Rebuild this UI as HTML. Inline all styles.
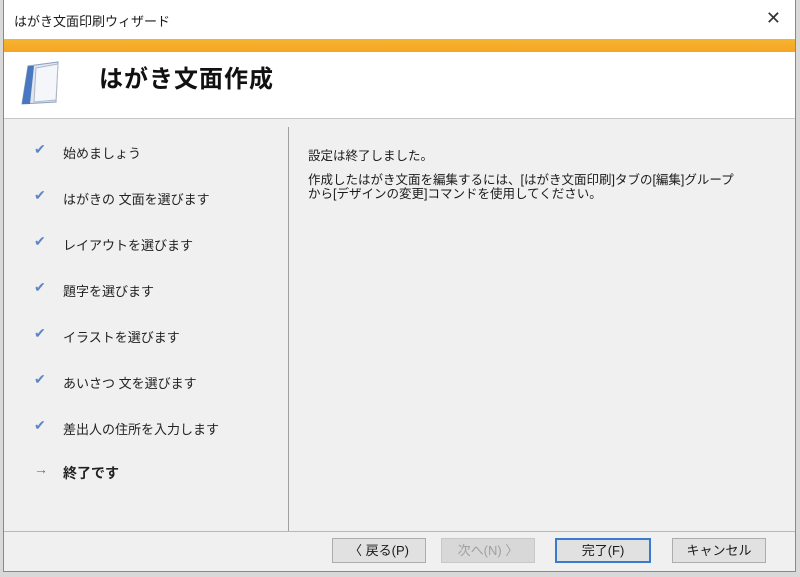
<!DOCTYPE html>
<html><head><meta charset="utf-8"><style>
body{margin:0;width:800px;height:577px;background:#d9d9d9;position:relative;overflow:hidden;font-family:"Liberation Sans","Noto Sans CJK JP",sans-serif;color:#1a1a1a}
.win{position:absolute;left:3px;top:0;width:793px;height:572px;background:#f0f0f0;border:1px solid #6a8fbf;border-top:none;box-sizing:border-box}
.title{position:absolute;left:0;top:0;right:0;height:39px;background:#fff;font-size:13px}
.title span{position:absolute;left:10px;top:11px}
.close{position:absolute;right:14px;top:8px;font-size:18px;color:#333}
.orange{position:absolute;left:0;right:0;top:39px;height:13px;background:linear-gradient(#f5b433,#f7a521)}
.head{position:absolute;left:0;right:0;top:52px;height:66px;background:#fff;border-bottom:1px solid #c8c8c8}
.head h1{position:absolute;left:95px;top:7px;margin:0;font-size:24px;font-weight:bold;color:#111;letter-spacing:1px}
.step{position:absolute;left:30px;font-size:13px;color:#222}
.step i{position:absolute;left:0;top:-2px;color:#5b86c9;font-style:normal;font-size:14px}
.step span{position:absolute;left:29px;top:0;white-space:nowrap}
.vl{position:absolute;left:284px;top:127px;width:1px;height:404px;background:#a0a0a0}
.hl{position:absolute;left:0;right:0;top:531px;height:1px;background:#b8b8b8}
.txt{position:absolute;left:304px;font-size:12.5px;white-space:nowrap}
.btn{position:absolute;top:538px;height:25px;background:#e1e1e1;border:1px solid #adadad;box-sizing:border-box;font-size:13px;text-align:center;line-height:23px}
</style></head><body>
<div class="win">
<div class="title"><span>はがき文面印刷ウィザード</span><div class="close">✕</div></div>
<div class="orange"></div>
<div class="head">
<svg style="position:absolute;left:14px;top:6px" width="52" height="50"><path d="M10 8 L40 4 L38 44 L4 46 Z" fill="#dfe6f0" stroke="#8aa0c0"/><path d="M4 46 L10 8 L16 8 L12 46 Z" fill="#4a78c0"/><path d="M18 10 L40 6 L38 42 L16 44 Z" fill="#f4f6fa" stroke="#b0b8c8"/></svg>
<h1>はがき文面作成</h1></div>
<div class="step" style="top:143px"><i>✔</i><span>始めましょう</span></div>
<div class="step" style="top:189px"><i>✔</i><span>はがきの 文面を選びます</span></div>
<div class="step" style="top:235px"><i>✔</i><span>レイアウトを選びます</span></div>
<div class="step" style="top:281px"><i>✔</i><span>題字を選びます</span></div>
<div class="step" style="top:327px"><i>✔</i><span>イラストを選びます</span></div>
<div class="step" style="top:373px"><i>✔</i><span>あいさつ 文を選びます</span></div>
<div class="step" style="top:419px"><i>✔</i><span>差出人の住所を入力します</span></div>
<div class="step" style="top:463px;font-weight:bold;font-size:14px"><i style="color:#3a9a3a;font-weight:bold">→</i><span>終了です</span></div>
<div class="vl"></div>
<div class="txt" style="top:145px">設定は終了しました。</div>
<div class="txt" style="top:173px;line-height:14px">作成したはがき文面を編集するには、[はがき文面印刷]タブの[編集]グループ<br>から[デザインの変更]コマンドを使用してください。</div>
<div class="hl"></div>
<div class="btn" style="left:328px;width:94px">〈 戻る(P)</div>
<div class="btn" style="left:437px;width:94px;color:#a0a0a0;border-color:#c8c8c8;background:#d8d8d8">次へ(N) 〉</div>
<div class="btn" style="left:551px;width:96px;border:2px solid #3a7bd0;line-height:21px">完了(F)</div>
<div class="btn" style="left:668px;width:94px">キャンセル</div>
</div>
</body></html>
